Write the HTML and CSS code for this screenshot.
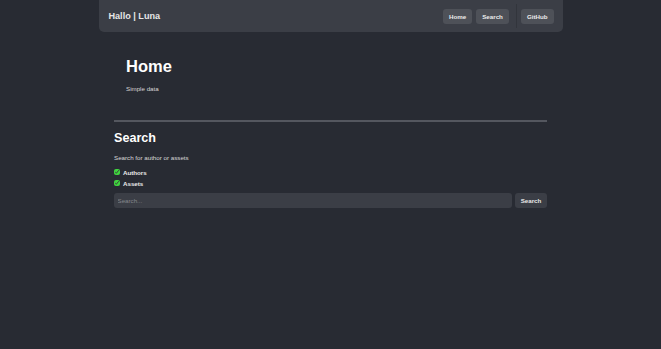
FILE: index.html
```html
<!DOCTYPE html>
<html lang="en">
<head>
<meta charset="utf-8">
<title>Hallo | Luna</title>
<link rel="stylesheet" href="styles.css">
</head>
<body>
<header class="topbar">
  <div class="brand">Hallo | Luna</div>
  <nav class="nav">
    <a class="nav-btn" href="#">Home</a>
    <a class="nav-btn" href="#">Search</a>
    <span class="nav-sep"></span>
    <a class="nav-btn" href="#">GitHub</a>
  </nav>
</header>
<main class="main">
  <section class="home">
    <h1 class="home-title">Home</h1>
    <p class="home-text">Simple data</p>
  </section>
  <hr class="divider">
  <section class="search">
    <h2 class="search-title">Search</h2>
    <p class="search-text">Search for author or assets</p>
    <label class="check-row"><input type="checkbox" class="check" checked><span>Authors</span></label>
    <label class="check-row"><input type="checkbox" class="check" checked><span>Assets</span></label>
    <div class="search-bar">
      <input class="search-input" type="text" placeholder="Search...">
      <button class="search-btn" type="button">Search</button>
    </div>
  </section>
</main>
</body>
</html>
```
FILE: styles.css
```css
* { box-sizing: border-box; }
html, body {
  margin: 0;
  padding: 0;
  background: #282b33;
  color: #e8e8e8;
  font-family: "Liberation Sans", Arial, sans-serif;
  font-size: 6.2px;
}
.topbar {
  width: 464px;
  height: 32px;
  margin: 0 auto;
  background: #3b3e46;
  border-radius: 0 0 5px 5px;
  display: flex;
  align-items: center;
  justify-content: space-between;
  padding: 0 9px 0 10px;
}
.brand {
  font-weight: bold;
  font-size: 9.1px;
  color: #e6e6e6;
}
.nav {
  display: flex;
  align-items: center;
  gap: 4px;
  height: 100%;
}
.nav-btn {
  display: flex;
  align-items: center;
  height: 15px;
  padding: 0 6px;
  background: #4e5158;
  border-radius: 3px;
  color: #ececec;
  text-decoration: none;
  font-weight: bold;
  font-size: 6.2px;
}
.nav-sep {
  width: 1px;
  align-self: stretch;
  margin: 4px 0 4px 3px;
  background: #32353c;
}
.main {
  width: 433px;
  margin: 0 auto;
}
.home {
  padding: 25px 12px 0;
}
.home-title {
  margin: 0;
  font-size: 16.5px;
  line-height: 19px;
  color: #ffffff;
}
.home-text {
  margin: 8.7px 0 0;
  line-height: 7.1px;
  color: #d8d8d8;
}
.divider {
  margin: 28px 0 0;
  border: 0;
  height: 2px;
  background: #54575f;
}
.search {
  padding-top: 9.7px;
}
.search-title {
  margin: 0;
  font-size: 12.6px;
  line-height: 14.3px;
  color: #ffffff;
}
.search-text {
  margin: 8.5px 0 0;
  line-height: 7.1px;
  color: #d8d8d8;
}
.check-row {
  display: flex;
  align-items: center;
  gap: 3px;
  height: 11.4px;
  font-weight: bold;
  color: #ececec;
}
.check-row:first-of-type { margin-top: 5px; }
.check {
  margin: 0;
  width: 6px;
  height: 6px;
  accent-color: #3fd43f;
}
.search-bar {
  display: flex;
  gap: 3px;
  margin-top: 3.5px;
}
.search-input {
  flex: 1;
  height: 15px;
  border: 0;
  border-radius: 3px;
  background: #3b3e46;
  color: #e8e8e8;
  font-family: inherit;
  font-size: 6.2px;
  padding: 0 3.5px;
  outline: none;
}
.search-input::placeholder { color: #84878d; }
.search-btn {
  width: 32px;
  height: 15px;
  border: 0;
  border-radius: 3px;
  background: #3b3e46;
  color: #e8e8e8;
  font-family: inherit;
  font-weight: bold;
  font-size: 6.2px;
  padding: 0;
}
```
